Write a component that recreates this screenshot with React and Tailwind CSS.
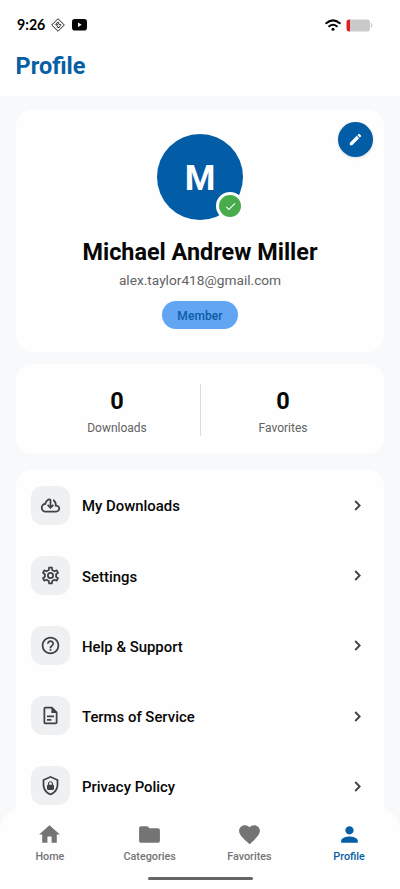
import { MdEdit, MdHome, MdFolder, MdFavorite, MdPerson, MdCheck, MdHelpOutline } from "react-icons/md";

const CLOUD =
  "M6.5 20Q4.22 20 2.61 18.43 1 16.85 1 14.58 1 12.63 2.17 11.1 3.35 9.57 5.25 9.15 5.68 7.35 7.38 5.73 9.07 4.1 11 4.1 11.83 4.1 12.41 4.69 13 5.28 13 6.1V12.15L14.6 10.6 16 12 12 16 8 12 9.4 10.6 11 12.15V6.1Q9.1 6.45 8.05 7.94 7 9.43 7 11H6.5Q5.05 11 4.03 12.03 3 13.05 3 14.5 3 15.95 4.03 17 5.05 18 6.5 18H18.5Q19.55 18 20.27 17.27 21 16.55 21 15.5 21 14.45 20.27 13.73 19.55 13 18.5 13H17V11Q17 9.8 16.45 8.76 15.9 7.73 15 7V4.68Q16.85 5.55 17.93 7.26 19 9 19 11 20.73 11.2 21.86 12.5 23 13.78 23 15.5 23 17.38 21.69 18.69 20.38 20 18.5 20Z";
const COG =
  "M12,8A4,4 0 0,1 16,12A4,4 0 0,1 12,16A4,4 0 0,1 8,12A4,4 0 0,1 12,8M12,10A2,2 0 0,0 10,12A2,2 0 0,0 12,14A2,2 0 0,0 14,12A2,2 0 0,0 12,10M10,22C9.75,22 9.54,21.82 9.5,21.58L9.13,18.93C8.5,18.68 7.96,18.34 7.44,17.94L4.95,18.95C4.73,19.03 4.46,18.95 4.34,18.73L2.34,15.27C2.21,15.05 2.27,14.78 2.46,14.63L4.57,12.97L4.5,12L4.57,11L2.46,9.37C2.27,9.22 2.21,8.95 2.34,8.73L4.34,5.27C4.46,5.05 4.73,4.96 4.95,5.05L7.44,6.05C7.96,5.66 8.5,5.32 9.13,5.07L9.5,2.42C9.54,2.18 9.75,2 10,2H14C14.25,2 14.46,2.18 14.5,2.42L14.87,5.07C15.5,5.32 16.04,5.66 16.56,6.05L19.05,5.05C19.27,4.96 19.54,5.05 19.66,5.27L21.66,8.73C21.79,8.95 21.73,9.22 21.54,9.37L19.43,11L19.5,12L19.43,13L21.54,14.63C21.73,14.78 21.79,15.05 21.66,15.27L19.66,18.73C19.54,18.95 19.27,19.04 19.05,18.95L16.56,17.95C16.04,18.34 15.5,18.68 14.87,18.93L14.5,21.58C14.46,21.82 14.25,22 14,22H10M11.25,4L10.88,6.61C9.68,6.86 8.62,7.5 7.85,8.39L5.44,7.35L4.69,8.65L6.8,10.2C6.4,11.37 6.4,12.64 6.8,13.8L4.68,15.36L5.43,16.66L7.86,15.62C8.63,16.5 9.68,17.14 10.87,17.38L11.24,20H12.76L13.13,17.39C14.32,17.14 15.37,16.5 16.14,15.62L18.57,16.66L19.32,15.36L17.2,13.81C17.6,12.64 17.6,11.37 17.2,10.2L19.31,8.65L18.56,7.35L16.15,8.39C15.38,7.5 14.32,6.86 13.12,6.62L12.75,4H11.25Z";
const DOC =
  "M6,2A2,2 0 0,0 4,4V20A2,2 0 0,0 6,22H18A2,2 0 0,0 20,20V8L14,2H6M6,4H13V9H18V20H6V4M8,12V14H16V12H8M8,16V18H13V16H8Z";
const SHIELD =
  "M21,11C21,16.55 17.16,21.74 12,23C6.84,21.74 3,16.55 3,11V5L12,1L21,5V11M12,21C15.75,20 19,15.54 19,11.22V6.3L12,3.18L5,6.3V11.22C5,15.54 8.25,20 12,21M14.8,11V9.5C14.8,8.1 13.4,7 12,7C10.6,7 9.2,8.1 9.2,9.5V11C8.6,11 8,11.6 8,12.2V15.7C8,16.4 8.6,17 9.2,17H14.7C15.4,17 16,16.4 16,15.8V12.3C16,11.6 15.4,11 14.8,11M13.5,11H10.5V9.5C10.5,8.7 11.2,8.2 12,8.2C12.8,8.2 13.5,8.7 13.5,9.5V11Z";

function Glyph({ d }) {
  return (
    <svg viewBox="0 0 24 24" className="size-[21px]" fill="currentColor">
      <path d={d} />
    </svg>
  );
}

const MENU = [
  { label: "My Downloads", icon: <Glyph d={CLOUD} /> },
  { label: "Settings", icon: <Glyph d={COG} /> },
  { label: "Help & Support", icon: <MdHelpOutline size={21} /> },
  { label: "Terms of Service", icon: <Glyph d={DOC} /> },
  { label: "Privacy Policy", icon: <Glyph d={SHIELD} /> },
];

const TABS = [
  { label: "Home", Icon: MdHome },
  { label: "Categories", Icon: MdFolder },
  { label: "Favorites", Icon: MdFavorite },
  { label: "Profile", Icon: MdPerson, active: true },
];

function StatusBar() {
  return (
    <div className="flex h-[50px] items-center pl-[17px] pr-[27px]">
      <span className="w-[29px] whitespace-nowrap pt-px font-['Lato',sans-serif] text-[14.2px] font-bold leading-none text-black">
        9:26
      </span>
      <svg viewBox="0 0 14 14" className="ml-[5px] size-[14px]" fill="none" stroke="#222" strokeWidth="1">
        <path d="M7 .7 13.3 7 7 13.3.7 7Z" />
        <path d="M4 6.8 7 3.8l1.2 1.2M5 8.2l3.2-3.2M5.8 9.3 7.3 7.8M7 10.2l3-3M8 6.6h2.2M5 6.2h2M6.5 9.5h2" strokeWidth=".9" />
      </svg>
      <svg viewBox="0 0 15 12" className="ml-[7px] h-[12px] w-[15px]">
        <rect width="15" height="11.5" rx="2.8" fill="#050505" />
        <path d="M6 3.6v4.3l3.7-2.15Z" fill="#fff" />
      </svg>
      <svg viewBox="0 0 16 12" className="ml-auto h-[12px] w-[16px]" fill="none" stroke="#050505" strokeWidth="2" strokeLinecap="round">
        <path d="M1.2 4.2Q8-1.5 14.8 4.2" />
        <path d="M4.2 7.3Q8 4.2 11.8 7.3" />
        <circle cx="8" cy="10.2" r="1.5" fill="#050505" stroke="none" />
      </svg>
      <svg viewBox="0 0 27 13" className="ml-[5px] h-[13px] w-[27px]">
        <path d="M4 .5h17a3 3 0 0 1 3 3v6a3 3 0 0 1-3 3H4Z" fill="#c9c9c9" />
        <path d="M4 .5H3.5a3 3 0 0 0-3 3v6a3 3 0 0 0 3 3H4Z" fill="#e0201f" />
        <path d="M25 4v5q1.2-.4 1.2-1.6V5.6Q26.2 4.4 25 4Z" fill="#c9c9c9" />
      </svg>
    </div>
  );
}

function Stat({ value, label }) {
  return (
    <div className="flex flex-1 flex-col items-center pt-px">
      <span className="text-[23.5px] font-bold leading-[30px]">{value}</span>
      <span className="mt-[4px] text-[12px] leading-4 text-[#626262]">{label}</span>
    </div>
  );
}

export default function App() {
  return (
    <div className="relative flex h-[889px] w-[400px] flex-col overflow-hidden bg-[#f8f9fa] font-['Roboto',sans-serif] text-[#070707]">
      <header className="h-[96px] shrink-0 bg-[#fefefe]">
        <StatusBar />
        <h1 className="pl-[15.5px] pt-px text-[23.5px] font-bold leading-[30px] text-[#065fa5]">Profile</h1>
      </header>

      <main className="flex flex-col px-4 pt-[14px]">
        <section className="relative flex h-[242px] shrink-0 flex-col items-center rounded-2xl bg-[#fefefe] pt-6">
          <div className="relative flex size-[86px] items-center justify-center rounded-full bg-[#025da6] text-[35px] font-bold text-white">
            <span className="pt-[4px]">M</span>
            <span className="absolute -right-px bottom-0 flex size-[28px] items-center justify-center rounded-full border-[3px] border-white bg-[#48ab4c]">
              <MdCheck size={13} />
            </span>
          </div>
          <h2 className="mt-[17px] text-[23.4px] font-bold leading-[30px]">Michael Andrew Miller</h2>
          <p className="mt-[3px] text-[13.7px] leading-5 text-[#626262]">alex.taylor418@gmail.com</p>
          <span className="mt-[11px] flex h-7 w-[76px] items-center justify-center rounded-full bg-[#62a5f3] pt-px text-[12px] font-medium tracking-[0.1px] text-[#0b5ca6]">
            Member
          </span>
          <button className="absolute right-[11px] top-[12px] flex size-[35px] items-center justify-center rounded-full bg-[#025da6] text-white shadow-[0_1px_3px_rgba(0,0,0,0.15)]">
            <MdEdit size={15} />
          </button>
        </section>

        <section className="mt-3 flex h-[90px] shrink-0 items-center rounded-2xl bg-[#fefefe] px-[18.5px] pt-[2px]">
          <Stat value="0" label="Downloads" />
          <div className="h-[52px] w-px bg-[#dcdcdc]" />
          <Stat value="0" label="Favorites" />
        </section>

        <section className="mt-4 flex h-[420px] shrink-0 flex-col rounded-2xl bg-[#fefefe]">
          {MENU.map(({ label, icon }) => (
            <div key={label} className="flex h-[70.2px] shrink-0 items-center pl-[15px] pr-[20px]">
              <span className="flex size-[39px] items-center justify-center rounded-[12px] bg-[#eff0f2] text-[#3e4145]">
                {icon}
              </span>
              <span className="ml-3 pt-[3px] text-[14.9px] font-medium">{label}</span>
              <svg viewBox="0 0 12 12" className="ml-auto size-3" fill="none" stroke="#3e4145" strokeWidth="1.8">
                <path d="M3.2 2 7.7 6.5 3.2 11" />
              </svg>
            </div>
          ))}
        </section>
      </main>

      <nav className="absolute inset-x-0 bottom-0 flex h-[82px] flex-col items-center rounded-t-[24px] bg-[#fefefe]">
        <div className="flex w-full pr-px pt-[15px]">
          {TABS.map(({ label, Icon, active }) => (
            <div
              key={label}
              className={
                active
                  ? "flex flex-1 flex-col items-center text-[#065fa5]"
                  : "flex flex-1 flex-col items-center text-[#747474]"
              }
            >
              <Icon size={25} />
              <span className="mt-[2px] text-[10.8px] font-medium leading-4">{label}</span>
            </div>
          ))}
        </div>
        <div className="mt-auto mb-[9px] h-[3px] w-[105px] rounded-full bg-[#666]" />
      </nav>
    </div>
  );
}
